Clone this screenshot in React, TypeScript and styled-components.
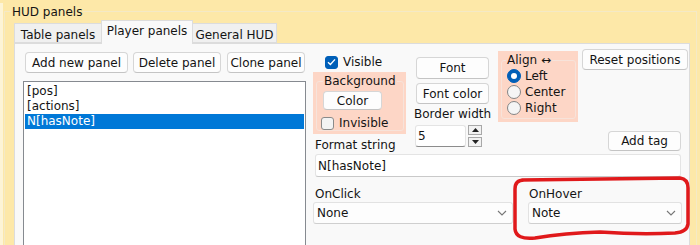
import React from "react";
import styled, { createGlobalStyle } from "styled-components";

const GlobalStyle = createGlobalStyle`
  html, body {
    margin: 0;
    background: #fde8a8;
  }
  body {
    font-family: "DejaVu Sans", Verdana, sans-serif;
    font-size: 12px;
    color: #141414;
    overflow: hidden;
  }
`;

const Frame = styled.div`
  position: relative;
  width: 700px;
  height: 245px;
  border-left: 3px solid #fdf4d6;
  box-sizing: border-box;
`;

const Outer = styled.fieldset`
  margin: 3px 3px 0 1px;
  padding: 1px 6px 0 9px;
  border: 1px solid #f4e9c6;
  border-bottom: none;
  min-width: 0;
`;

const OuterLegend = styled.legend`
  padding: 2px 1px 0;
  margin-left: -3px;
  line-height: 14px;
`;

const TabBar = styled.div`
  display: flex;
  align-items: flex-end;
  height: 23px;
  position: relative;
  z-index: 1;
`;

const Tab = styled.div<{ $active?: boolean; $w: number }>`
  width: ${(p) => p.$w}px;
  height: ${(p) => (p.$active ? 24 : 20)}px;
  box-sizing: border-box;
  margin-bottom: ${(p) => (p.$active ? -1 : 0)}px;
  margin-right: -1px;
  padding-top: ${(p) => (p.$active ? 3 : 4)}px;
  text-align: center;
  line-height: 14px;
  background: ${(p) => (p.$active ? "#f9f9f9" : "#f0f0f0")};
  border: 1px solid #dcdcdc;
  border-bottom: ${(p) => (p.$active ? "none" : "1px solid #dcdcdc")};
`;

const Pane = styled.div`
  display: flex;
  height: 210px;
  box-sizing: border-box;
  padding: 5px 0 0 8px;
  background: #f9f9f9;
  border: 1px solid #dcdcdc;
`;

const LeftPanel = styled.div`
  width: 283px;
  display: flex;
  flex-direction: column;
`;

const ButtonRow = styled.div`
  display: flex;
  margin: 3px 0 0 2px;
  gap: 5px;
`;

const Button = styled.button<{ $w: number; $h?: number }>`
  width: ${(p) => p.$w}px;
  height: ${(p) => p.$h ?? 21}px;
  box-sizing: border-box;
  padding: 0;
  font: inherit;
  color: #141414;
  background: #fdfdfd;
  border: 1px solid #d6d6d6;
  border-bottom-color: #c4c4c4;
  border-radius: 4px;
  white-space: nowrap;
`;

const List = styled.div`
  margin-top: 8px;
  flex: 1;
  background: #fff;
  border: 1px solid #868a90;
  padding: 2px 1px;
`;

const ListItem = styled.div<{ $selected?: boolean }>`
  height: 15px;
  line-height: 15px;
  padding-left: 2px;
  background: ${(p) => (p.$selected ? "#0078d7" : "transparent")};
  color: ${(p) => (p.$selected ? "#fff" : "#141414")};
`;

const RightPanel = styled.div`
  width: 375px;
  margin-left: 7px;
  display: flex;
  flex-direction: column;
`;

const TopRow = styled.div`
  display: flex;
  align-items: flex-start;
`;

const Column = styled.div<{ $w: number; $ml?: number }>`
  width: ${(p) => p.$w}px;
  margin-left: ${(p) => p.$ml ?? 0}px;
  display: flex;
  flex-direction: column;
  align-items: flex-start;
`;

const CheckRow = styled.label<{ $mt?: number; $ml?: number }>`
  display: flex;
  align-items: center;
  gap: 5px;
  height: 14px;
  margin-top: ${(p) => p.$mt ?? 0}px;
  margin-left: ${(p) => p.$ml ?? 0}px;
  line-height: 14px;
`;

const CheckBox = styled.span<{ $checked?: boolean }>`
  width: 13px;
  height: 13px;
  box-sizing: border-box;
  border-radius: 3px;
  display: flex;
  align-items: center;
  justify-content: center;
  background: ${(p) => (p.$checked ? "#005fb8" : "#f3f3f3")};
  border: 1px solid ${(p) => (p.$checked ? "#005fb8" : "#8a8a8a")};
`;

const SalmonBox = styled.div<{ $w: number; $h: number; $mt: number }>`
  width: ${(p) => p.$w}px;
  height: ${(p) => p.$h}px;
  margin-top: ${(p) => p.$mt}px;
  box-sizing: border-box;
  padding: 2px 2px 3px 3px;
  background: #fdd6c6;
`;

const InnerGroup = styled.fieldset<{ $pl: number }>`
  margin: 0;
  height: 100%;
  box-sizing: border-box;
  padding: 0 0 0 ${(p) => p.$pl}px;
  border: 1px solid #f7e3da;
  border-radius: 3px;
  min-width: 0;
  display: flex;
  flex-direction: column;
  align-items: flex-start;
`;

const GroupLegend = styled.legend<{ $ml: number }>`
  padding: 0 1px;
  margin-left: ${(p) => p.$ml}px;
  line-height: 14px;
`;

const Label = styled.div<{ $mt?: number; $pl?: number }>`
  margin-top: ${(p) => p.$mt ?? 0}px;
  padding-left: ${(p) => p.$pl ?? 0}px;
  line-height: 15px;
  white-space: nowrap;
`;

const SpinRow = styled.div`
  display: flex;
  margin-top: 3px;
  margin-left: 1px;
  gap: 2px;
`;

const TextField = styled.div<{ $w: number; $h: number }>`
  width: ${(p) => p.$w}px;
  height: ${(p) => p.$h}px;
  box-sizing: border-box;
  padding-left: 2px;
  display: flex;
  align-items: center;
  background: #fff;
  border: 1px solid #e4e4e4;
  border-bottom-color: #8c8c8c;
  border-radius: 3px;
`;

const SpinButtons = styled.div`
  display: flex;
  flex-direction: column;
  gap: 2px;
`;

const SpinButton = styled.div`
  width: 14px;
  height: 10px;
  box-sizing: border-box;
  border: 1px solid #a8a8a8;
  background: #f2f2f2;
  display: flex;
  align-items: center;
  justify-content: center;
`;

const RadioRow = styled.div`
  display: flex;
  align-items: center;
  gap: 4px;
  height: 16px;
`;

const Radio = styled.span<{ $checked?: boolean }>`
  width: 14px;
  height: 14px;
  box-sizing: border-box;
  border-radius: 50%;
  display: flex;
  align-items: center;
  justify-content: center;
  background: ${(p) => (p.$checked ? "#005fb8" : "#f5f5f5")};
  border: 1px solid ${(p) => (p.$checked ? "#005fb8" : "#858585")};
  &::after {
    content: "";
    display: ${(p) => (p.$checked ? "block" : "none")};
    width: 6px;
    height: 6px;
    border-radius: 50%;
    background: #fff;
  }
`;

const FormatInput = styled(TextField)`
  margin: 1px 0 0 2px;
  border-bottom-color: #c9c9c9;
`;

const ComboRow = styled.div`
  display: flex;
  margin-top: 10px;
`;

const Combo = styled.div<{ $w: number }>`
  width: ${(p) => p.$w}px;
  height: 22px;
  box-sizing: border-box;
  padding: 0 5px 0 3px;
  display: flex;
  align-items: center;
  justify-content: space-between;
  background: #fdfdfd;
  border: 1px solid #e2e2e2;
  border-bottom-color: #cfcfcf;
  border-radius: 3px;
`;

const Annotation = styled.svg`
  position: absolute;
  left: 0;
  top: 0;
  pointer-events: none;
`;

const Check = () => (
  <svg width="9" height="8" viewBox="0 0 9 8">
    <path d="M1 4.2 L3.4 6.4 L8 1.4" fill="none" stroke="#fff" strokeWidth="1.4" />
  </svg>
);

const Chevron = () => (
  <svg width="10" height="6" viewBox="0 0 10 6">
    <path d="M1 1 L5 5 L9 1" fill="none" stroke="#777" strokeWidth="1.1" />
  </svg>
);

const Triangle = ({ up }: { up?: boolean }) => (
  <svg width="7" height="4" viewBox="0 0 7 4">
    <path d={up ? "M0 4 L3.5 0 L7 4 Z" : "M0 0 L3.5 4 L7 0 Z"} fill="#222" />
  </svg>
);

const App = () => {
  const items = ["[pos]", "[actions]", "N[hasNote]"];
  return (
    <>
      <GlobalStyle />
      <Frame>
        <Outer>
          <OuterLegend>HUD panels</OuterLegend>
          <TabBar>
            <Tab $w={88}>Table panels</Tab>
            <Tab $w={92} $active>
              Player panels
            </Tab>
            <Tab $w={85}>General HUD</Tab>
          </TabBar>
          <Pane>
            <LeftPanel>
              <ButtonRow>
                <Button $w={103}>Add new panel</Button>
                <Button $w={88}>Delete panel</Button>
                <Button $w={78} style={{ marginLeft: 1 }}>
                  Clone panel
                </Button>
              </ButtonRow>
              <List>
                {items.map((it, i) => (
                  <ListItem key={it} $selected={i === 2}>
                    {it}
                  </ListItem>
                ))}
              </List>
            </LeftPanel>

            <RightPanel>
              <TopRow>
                <Column $w={93}>
                  <CheckRow $mt={6} $ml={12}>
                    <CheckBox $checked>
                      <Check />
                    </CheckBox>
                    Visible
                  </CheckRow>
                  <SalmonBox $w={93} $h={62} $mt={3}>
                    <InnerGroup $pl={6}>
                      <GroupLegend $ml={0}>Background</GroupLegend>
                      <Button $w={59} $h={20} style={{ marginTop: 3 }}>
                        Color
                      </Button>
                      <CheckRow $mt={6} $ml={-2}>
                        <CheckBox />
                        Invisible
                      </CheckRow>
                    </InnerGroup>
                  </SalmonBox>
                  <Label $mt={4} $pl={2}>
                    Format string
                  </Label>
                </Column>

                <Column $w={75} $ml={8}>
                  <Button $w={73} $h={22} style={{ marginTop: 8, marginLeft: 2 }}>
                    Font
                  </Button>
                  <Button $w={73} style={{ marginTop: 4, marginLeft: 2 }}>
                    Font color
                  </Button>
                  <Label $mt={3}>Border width</Label>
                  <SpinRow>
                    <TextField $w={51} $h={22}>
                      5
                    </TextField>
                    <SpinButtons>
                      <SpinButton>
                        <Triangle up />
                      </SpinButton>
                      <SpinButton>
                        <Triangle />
                      </SpinButton>
                    </SpinButtons>
                  </SpinRow>
                </Column>

                <Column $w={80} $ml={9}>
                  <SalmonBox $w={80} $h={71} $mt={2}>
                    <InnerGroup $pl={5}>
                      <GroupLegend $ml={-1}>Align ↔</GroupLegend>
                      <RadioRow style={{ marginTop: 1 }}>
                        <Radio $checked />
                        Left
                      </RadioRow>
                      <RadioRow>
                        <Radio />
                        Center
                      </RadioRow>
                      <RadioRow>
                        <Radio />
                        Right
                      </RadioRow>
                    </InnerGroup>
                  </SalmonBox>
                </Column>

                <Column $w={106} $ml={4}>
                  <Button $w={106}>Reset positions</Button>
                  <Button $w={73} $h={20} style={{ marginTop: 61, marginLeft: 26 }}>
                    Add tag
                  </Button>
                </Column>
              </TopRow>

              <FormatInput $w={366} $h={23}>
                N[hasNote]
              </FormatInput>

              <ComboRow>
                <Column $w={200}>
                  <Label $pl={2}>OnClick</Label>
                  <Combo $w={200}>
                    None
                    <Chevron />
                  </Combo>
                </Column>
                <Column $w={154} $ml={15}>
                  <Label $pl={1}>OnHover</Label>
                  <Combo $w={154}>
                    Note
                    <Chevron />
                  </Combo>
                </Column>
              </ComboRow>
            </RightPanel>
          </Pane>
        </Outer>
        <Annotation width="700" height="245" viewBox="0 0 700 245">
          <path
            d="M522 177 L680 175 Q688 176 688 185 L688 221 Q687 229 675 230 Q640 232 600 229 Q565 230 535 235 Q516 237 515 226 L515 186 Q515 177 524 177"
            fill="none"
            stroke="#e0191b"
            strokeWidth="3.5"
            strokeLinecap="round"
            strokeLinejoin="round"
            transform="translate(-3 0)"
          />
        </Annotation>
      </Frame>
    </>
  );
};

export default App;
